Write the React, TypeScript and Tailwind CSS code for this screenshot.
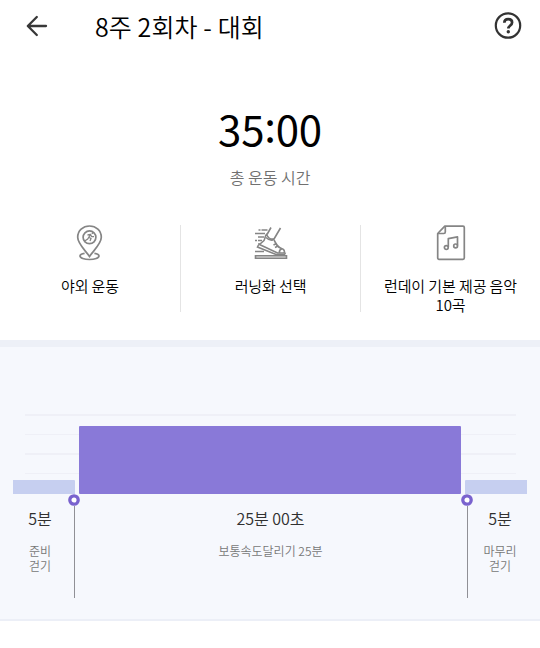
import React from 'react';

const LocationIcon = () => (
  <svg className="h-[36px] w-[28px] shrink-0" viewBox="0 0 28 36" fill="none" stroke="#858585" strokeWidth="1.7">
    <path d="M13.500 31.500C10 26 1.700 19 1.700 12.300C1.700 5.800 6.900 1 13.500 1s11.800 4.800 11.800 11.300C25.300 19 17 26 13.500 31.500Z" />
    <circle cx="13.500" cy="12.300" r="6.400" />
    <path d="M8.600 28.300C6 28.600 4 29.600 4 31c0 2 4.300 3.500 9.500 3.500s9.500-1.500 9.500-3.500c0-1.400-2-2.400-4.600-2.700" />
    <path d="M11.500 10l3-.5-2.800 4.500-3 2M12.800 12.200l2.200 1.300-1 2.500M14.500 9.800l1.200 1.900h2.300M16 8.700l1.200-1.200" strokeWidth="1.300" />
  </svg>
);

const ShoeIcon = () => (
  <svg className="h-[36px] w-[34px] shrink-0" viewBox="0 0 34 36" fill="none" stroke="#858585" strokeWidth="1.600">
    <path d="M17 2.500l-4 7M26.500 3l-6.500 11" />
    <path d="M12.500 9.500c-1.500 1-1 3-2.500 6L5.500 19.500l18 8.500h6.500c1.200-1.800-.2-4-2.500-4.500-4-.8-5.500-4.500-8-9.500-2.500.5-5-.5-7-4.500Z" />
    <path d="M4.500 20l-1 2 18.500 7.500h8.500l1-2M12 12.500c2 2 4.500 3 7 2.500M19.500 20l3-1.500M21 22.500l3-1.500M25.500 28c-.5-2 .5-3.500 2.500-4.500" />
    <path d="M4.500 5h2M7.500 5h6M1 8.500h10M4 12h6M1 15.500h2M4 15.500h4M4 19h2M1 26.500h9" strokeWidth="1.300" />
    <rect x="1.500" y="30.800" width="31" height="2.400" />
  </svg>
);

const MusicIcon = () => (
  <svg className="h-[36px] w-[30px] shrink-0" viewBox="0 0 30 36" fill="none" stroke="#858585" strokeWidth="1.700" strokeLinejoin="round">
    <path d="M8.800 1.200H27a1.300 1.300 0 0 1 1.300 1.300v30.500a1.300 1.300 0 0 1-1.300 1.300H3a1.300 1.300 0 0 1-1.300-1.300V8.500Z" />
    <path d="M9.300 1.500v5.500a1.500 1.500 0 0 1-1.500 1.500H2" />
    <path d="M12.300 22V13.700l9.200-1.800v8.600" />
    <circle cx="10.300" cy="22.600" r="1.900" />
    <circle cx="19.600" cy="20.900" r="1.900" />
  </svg>
);

const options = [
  { icon: <LocationIcon />, label: ['야외 운동'] },
  { icon: <ShoeIcon />, label: ['러닝화 선택'] },
  { icon: <MusicIcon />, label: ['런데이 기본 제공 음악', '10곡'] },
];

const Marker = () => (
  <div className="absolute -right-[6px] top-0 flex w-[12px] flex-col items-center">
    <svg className="h-[12px] w-[12px]" viewBox="0 0 12 12">
      <circle cx="6" cy="6" r="4.200" fill="#fff" stroke="#7962ce" strokeWidth="3.300" />
    </svg>
    <div className="ml-px h-[92px] w-px bg-[#909096]" />
  </div>
);

const Header = () => (
  <header className="flex h-[52px] items-center pl-[26px] pr-[18px]">
    <svg className="h-[22px] w-[22px]" viewBox="0 0 22 22" fill="none" stroke="#383838" strokeWidth="2.300" strokeLinecap="round" strokeLinejoin="round">
      <path d="M20 11H2M10.800 2L1.800 11l9 9" />
    </svg>
    <h1 className="ml-[47px] text-[25px] font-[350] leading-[50px] tracking-[0.1px] text-black">8주 2회차 - 대회</h1>
    <svg className="ml-auto h-[28px] w-[28px]" viewBox="0 0 28 28" fill="none" stroke="#333" strokeWidth="2.200">
      <circle cx="14" cy="13.500" r="12.200" />
      <path d="M10.300 10.800c.1-2.300 1.700-3.600 3.900-3.600 2.300 0 3.900 1.300 3.900 3.300 0 2.900-3.700 3-3.700 6" strokeWidth="2.700" />
      <circle cx="14.300" cy="19.800" r="1.700" fill="#333" stroke="none" />
    </svg>
  </header>
);

const WorkoutChart = () => (
  <section className="h-[281px] border-t-[7px] border-b-2 border-t-[#edf0f7] border-b-[#eceff7] bg-[#f6f8fd]">
    <div className="relative flex h-[147px] items-end pl-[13px] pr-[13px]">
      <div className="absolute left-[25px] right-[24px] top-[67px] flex flex-col gap-[18px]">
        <div className="h-[1.500px] bg-[#eff0f7]" />
        <div className="h-[1.500px] bg-[#eff0f7]" />
        <div className="h-[1.500px] bg-[#eff0f7]" />
        <div className="h-[1.500px] bg-[#eff0f7]" />
      </div>
      <div className="relative flex w-full items-end justify-between">
        <div className="h-[14px] w-[62px] rounded-tr-[1px] bg-[#c6cff0]" />
        <div className="h-[68px] w-[382px] rounded-[1px] bg-[#8979d8]" />
        <div className="h-[14px] w-[62px] rounded-tl-[1px] bg-[#c6cff0]" />
      </div>
    </div>
    <div className="flex text-center font-[350]">
      <div className="relative h-[104px] w-[74px] pl-[6px] pt-[13px]">
        <p className="text-[16px] leading-[22px] text-[#303030]">5분</p>
        <p className="mt-[14px] text-[12px] leading-[15px] text-[#777]">준비<br />걷기</p>
        <Marker />
      </div>
      <div className="relative h-[104px] w-[393px] pt-[13px]">
        <p className="text-[16px] leading-[22px] text-[#303030]">25분 00초</p>
        <p className="mt-[14px] text-[12px] leading-[15px] text-[#777]">보통속도달리기 25분</p>
        <Marker />
      </div>
      <div className="h-[104px] flex-1 pr-[7px] pt-[13px]">
        <p className="text-[16px] leading-[22px] text-[#303030]">5분</p>
        <p className="mt-[14px] text-[12px] leading-[15px] text-[#777]">마무리<br />걷기</p>
      </div>
    </div>
  </section>
);

const App = () => {
  return (
    <div className="h-[648px] w-[540px] overflow-hidden bg-white font-['Noto_Sans_CJK_KR',sans-serif]">
      <Header />
      <section className="flex h-[173px] flex-col items-center pt-[50px]">
        <div className="text-[42px] leading-[52px] tracking-[-0.2px] text-black">
          35<span className="relative -top-[4px]">:</span>00
        </div>
        <p className="mt-[11px] text-[16px] font-[350] leading-[24px] text-[#707070]">총 운동 시간</p>
      </section>
      <section className="flex h-[115px]">
        {options.map((option, i) => (
          <div
            key={i}
            className="flex h-[87px] w-[180px] flex-col items-center border-[#e4e4e4] not-first:border-l"
          >
            {option.icon}
            <div className="mt-[15px] text-center text-[15px] font-[350] leading-[19px] tracking-[-0.1px] text-black">
              {option.label.map((line) => (
                <p key={line}>{line}</p>
              ))}
            </div>
          </div>
        ))}
      </section>
      <WorkoutChart />
    </div>
  );
};

export default App;
